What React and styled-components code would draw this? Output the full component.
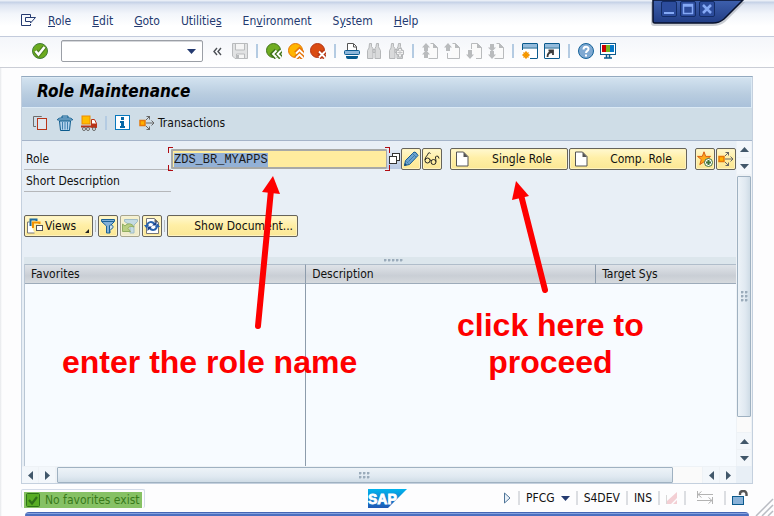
import React, { useEffect, useRef } from "react";
import styled, { createGlobalStyle, css } from "styled-components";

const Global = createGlobalStyle`
  *, *::before, *::after { box-sizing: border-box; }
  body { margin: 0; overflow: hidden; background: #fdfdfe; }
  button, input, select { font: inherit; color: inherit; margin: 0; }
  button { padding: 0; border: 0; background: none; }
  svg { display: block; flex: none; }
`;

const Page = styled.div`
  position: relative;
  display: flex;
  flex-direction: column;
  height: 100vh;
  font: 12px/16px "DejaVu Sans Condensed", "Noto Sans", sans-serif;
  color: #111;
  background: linear-gradient(90deg, #e6e8eb, #fdfdfe 2px);
`;

/* ---------- menu and system toolbar ---------- */

const MenuBar = styled.nav`
  display: flex;
  align-items: center;
  gap: 21px;
  height: 37px;
  flex: none;
  padding: 6px 20px 0;
  color: #243a70;
  background: linear-gradient(#e9eef6 0 1px, #c3d0e6 2px, #dde4f1 5px, #f3f6fb 14px, #fff 26px);
  border-bottom: 1px solid #c3cbdc;
`;

const MenuStart = styled.div`
  display: flex;
  align-items: center;
  gap: 12px;
`;

const SystemBar = styled.div`
  display: flex;
  align-items: center;
  gap: 6px;
  height: 31px;
  flex: none;
  padding: 0 32px 2px;
  background: linear-gradient(#f4f6fa, #fff);
  border-bottom: 1px solid #cbced6;
`;

const CommandField = styled.div`
  display: flex;
  align-items: center;
  width: 142px;
  height: 22px;
  margin: 0 4px 0 7px;
  padding-right: 6px;
  background: #fff;
  border: 1px solid #9b9fa6;
  border-radius: 2px;
  box-shadow: inset 0 1px 0 #d5d7db;
`;

const CommandInput = styled.input`
  flex: 1;
  min-width: 0;
  height: 18px;
  border: 0;
  outline: 0;
  background: transparent;
`;

const Divider = styled.span`
  flex: none;
  width: ${(p) => p.$w || 2}px;
  height: ${(p) => p.$h || 14}px;
  margin: 0 ${(p) => p.$m || 0}px;
  background: ${(p) => p.$color || "#b4cbe2"};
`;

const SaveSlot = styled.div`
  display: flex;
  padding-left: 4px;
`;

const WindowTab = styled.div`
  position: absolute;
  top: 0;
  right: 28px;
  width: 98px;
  height: 28px;
`;

const WindowButtons = styled.div`
  position: absolute;
  top: 1px;
  left: 13px;
  display: flex;
  gap: 3px;
`;

const WindowButton = styled.button`
  width: 16px;
  height: 16px;
  border: 1px solid #132c66;
  border-radius: 2px;
  background: #2c4c9c;
`;

/* ---------- main panel ---------- */

const Panel = styled.main`
  display: flex;
  flex-direction: column;
  flex: 1;
  min-height: 0;
  margin: 8px 21px 0;
  border: 1px solid #c4d0de;
  border-top: 1px solid #93a9bf;
  background: #e8eff6;
`;

const TitleBar = styled.h1`
  flex: none;
  height: 31px;
  margin: 0;
  padding: 0 15px;
  font-size: 17px;
  line-height: 26px;
  font-weight: bold;
  font-style: italic;
  color: #000;
  background: linear-gradient(#d2e2ef, #b9cde0 55%, #aac1da);
  border: 1px solid #dceaf5;
  border-width: 1px 1px 1px 0;
`;

const AppBar = styled.div`
  display: flex;
  align-items: center;
  gap: 8px;
  flex: none;
  height: 33px;
  padding: 0 11px 2px;
  background: #cfdde7;
  border-bottom: 1px solid #a5b4c9;
`;

const TextTool = styled.button`
  display: flex;
  align-items: center;
  gap: 3px;
`;

const Viewport = styled.div`
  display: grid;
  grid-template: minmax(0, 1fr) 17px / minmax(0, 1fr) 16px;
  flex: 1;
  min-height: 0;
`;

const Content = styled.div`
  display: flex;
  flex-direction: column;
  min-width: 0;
  padding-left: 2px;
  overflow: hidden;
`;

const Form = styled.div`
  display: flex;
  flex-direction: column;
  flex: none;
  padding-top: 7px;
`;

const Row = styled.div`
  display: flex;
  align-items: center;
  height: 22px;
`;

const FieldLabel = styled.label`
  flex: none;
  width: 147px;
  height: 22px;
  padding-left: 2px;
  line-height: 22px;
  border-bottom: 1px solid #b5b7ba;
`;

const corner = css`
  content: "";
  position: absolute;
  width: 5px;
  top: -2px;
  bottom: -2px;
  background:
    linear-gradient(#b00c12 0 0) var(--edge) top / 1px 6px no-repeat,
    linear-gradient(#b00c12 0 0) var(--edge) bottom / 1px 6px no-repeat,
    linear-gradient(#b00c12 0 0) 0 top / 5px 1px no-repeat,
    linear-gradient(#b00c12 0 0) 0 bottom / 5px 1px no-repeat;
`;

const RoleField = styled.div`
  position: relative;
  flex: none;
  width: 216px;
  height: 20px;
  &::before { ${corner} --edge: left; left: -3px; }
  &::after { ${corner} --edge: right; right: -3px; }
`;

const RoleInput = styled.input`
  display: block;
  width: 216px;
  height: 20px;
  padding: 2px 2px 0 1px;
  border: 2px solid #a8a9a6;
  border-right-width: 1px;
  border-radius: 1px;
  outline: 0;
  background: #ffec9e;
  font: 12px/14px "Liberation Mono", monospace;
  color: #1a1a1a;
  &::selection { background: #93b1d6; color: #1a1a1a; }
`;

const HelpButton = styled.button`
  display: flex;
  align-items: center;
  justify-content: center;
  width: 16px;
  height: 19px;
  background: linear-gradient(#dfe8f4, #b9c9e4);
`;

const Button = styled.button`
  display: flex;
  align-items: center;
  justify-content: ${(p) => p.$align || "center"};
  flex: none;
  width: ${(p) => p.$w || 20}px;
  height: 22px;
  padding: ${(p) => p.$pad || "0"};
  gap: ${(p) => p.$gap || 0}px;
  border: 1px solid ${(p) => (p.$faded ? "#a7a58f" : "#66645c")};
  border-radius: 2px;
  background: ${(p) =>
    p.$faded
      ? "linear-gradient(#f6f1cc, #efebc9)"
      : "linear-gradient(#fff8d0, #ffefa6 45%, #fbe795)"};
  box-shadow: inset 0 0 0 1px ${(p) => (p.$faded ? "#f4f1d6" : "#fff3bd")};
  white-space: nowrap;
`;

const Cluster = styled.div`
  display: flex;
  gap: ${(p) => p.$gap || 1}px;
  margin-left: ${(p) => p.$ml || 0}px;
`;

const Caption = styled.span`
  flex: 1;
  text-align: center;
`;

const ViewsRow = styled(Row)`
  gap: 2px;
  margin: 23px 0 20px;
`;

const Notch = styled.span`
  align-self: flex-end;
  margin: 0 3px 3px auto;
  border: 2px solid #222;
  border-top-color: transparent;
  border-left-color: transparent;
`;

const Splitter = styled.div`
  display: flex;
  justify-content: center;
  align-items: center;
  flex: none;
  height: 7px;
  padding-left: 27px;
  background: #dce6ec;
`;

const Grip = styled.span`
  width: ${(p) => p.$w}px;
  height: ${(p) => p.$h}px;
  background: radial-gradient(circle at 1px 1px, #9aabba 1px, transparent 2px) 0 0 / 4px 4px;
`;

const Table = styled.table`
  width: 100%;
  height: 100%;
  table-layout: fixed;
  border-collapse: separate;
  border-spacing: 0;
  background: #f7fbff;
  border-left: 1px solid #b9c6d4;
`;

const TableBox = styled.div`
  flex: 1;
  min-height: 0;
`;

const Th = styled.th`
  width: ${(p) => p.$w};
  height: 20px;
  padding: 0 6px;
  font-weight: normal;
  text-align: left;
  background: linear-gradient(#dfe3e8, #c9ced5 60%, #d6dade);
  border-top: 1px solid #b0bdca;
  border-bottom: 1px solid #9dabba;
  & + & { border-left: 1px solid #8d9cac; }
`;

const Td = styled.td`
  padding: 0;
  border-left: ${(p) => (p.$line ? "1px solid #8d9cac" : "0")};
`;

/* ---------- scrollbars ---------- */

const ScrollBar = styled.div`
  display: flex;
  flex-direction: ${(p) => (p.$vertical ? "column" : "row")};
  gap: 1px;
  background: #eef2f6;
  padding: ${(p) => (p.$vertical ? "0 1px" : "1px 0 0")};
  min-width: 0;
  min-height: 0;
`;

const ScrollButton = styled.button`
  display: flex;
  align-items: center;
  justify-content: center;
  flex: none;
  width: ${(p) => (p.$vertical ? "auto" : "16px")};
  height: ${(p) => (p.$vertical ? "16px" : "auto")};
  background: #f3f7fb;
`;

const Track = styled.div`
  display: flex;
  flex-direction: ${(p) => (p.$vertical ? "column" : "row")};
  flex: 1;
  min-height: 0;
  margin: ${(p) => (p.$vertical ? "1px 0 0" : "0 0 0 1px")};
  background: #fafafa;
`;

const Thumb = styled.div`
  display: flex;
  align-items: center;
  justify-content: center;
  flex: 0 0 ${(p) => p.$size};
  border: 1px solid #9fb1c1;
  border-radius: 1px;
  background: linear-gradient(${(p) => (p.$vertical ? "90deg" : "180deg")}, #edf3f8, #e0e9f1 60%, #cfdce6);
`;

/* ---------- status bar ---------- */

const StatusBar = styled.footer`
  display: grid;
  grid-template-columns: 1fr auto 1fr;
  align-items: center;
  flex: none;
  height: 28px;
  margin: 0 21px;
`;

const MessageFrame = styled.div`
  justify-self: start;
  padding: 2px 2px 0;
  border: 1px solid #d3dbe8;
  border-bottom: 0;
  border-radius: 2px;
`;

const Message = styled.div`
  display: flex;
  align-items: center;
  gap: 5px;
  height: 16px;
  padding: 0 2px;
  color: #397a1b;
  background: #86c164;
`;

const StatusItems = styled.div`
  display: flex;
  align-items: center;
  justify-content: flex-end;
  gap: 6px;
  padding-right: 5px;
`;

const StatusButton = styled.button`
  display: flex;
  align-items: center;
  gap: 6px;
`;

const BottomEdge = styled.div`
  flex: none;
  height: 4px;
  margin: 0 25px;
  border-top: 1px solid #4666b4;
  border-radius: 12px 12px 0 0;
  background: linear-gradient(#86a3e0 0 1px, #4b6fc0 1px);
`;

const SizeGrip = styled.div`
  position: absolute;
  right: 0;
  bottom: 0;
`;

/* ---------- callouts ---------- */

const Callouts = styled.div`
  position: absolute;
  inset: 0;
  pointer-events: none;
`;

const Arrow = styled.svg`
  position: absolute;
  left: ${(p) => p.$x}px;
  top: ${(p) => p.$y}px;
`;

const Note = styled.p`
  position: absolute;
  left: ${(p) => p.$x}px;
  top: ${(p) => p.$y}px;
  margin: 0;
  font: bold 32px/37px "Liberation Sans", Arial, sans-serif;
  color: #fe0000;
  text-align: center;
  white-space: nowrap;
`;

/* ---------- icons ---------- */

const Icon = ({ children, w = 16, h = 16, ...rest }) => (
  <svg width={w} height={h} viewBox={`0 0 ${w} ${h}`} fill="none" aria-hidden="true" {...rest}>
    {children}
  </svg>
);

const MenuIcon = () => (
  <Icon stroke="#243a70">
    <path d="M10.500 4V1.500h-9v11h9V11" />
    <path d="M5.500 4.500h10L10.500 10v-1.500h-5z" />
  </Icon>
);

const OkIcon = () => (
  <Icon>
    <circle cx="8" cy="8" r="7.500" fill="#6cab1f" stroke="#427c3a" />
    <path d="M3.500 8l3 3.500 6-7.500" stroke="#4b7d22" strokeWidth="4.500" />
    <path d="M3.500 8l3 3.500 6-7.500" stroke="#fff" strokeWidth="2.500" />
  </Icon>
);

const DropArrow = ({ color = "#243a70" }) => (
  <Icon w={9} h={5}><path d="M0 0h9L4.500 5z" fill={color} /></Icon>
);

const ChevronsIcon = () => (
  <Icon w={9} h={9} stroke="#4b4f55" strokeWidth="1.400"><path d="M4 1L1 4.500 4 8M8 1L5 4.500 8 8" /></Icon>
);

const SaveIcon = () => (
  <Icon stroke="#b9bbbd">
    <path d="M.5.5h15v15H3l-2.500-2.500z" fill="#e1e2e3" />
    <path d="M3.500 1v6h9V1M4.500 15v-4h8v4" fill="#f5f5f5" />
    <path d="M6 12v3" strokeWidth="2" />
  </Icon>
);

const Round = ({ fill, edge, kind }) => (
  <Icon>
    <circle cx="7.500" cy="7.500" r="7" fill={fill} stroke={edge} />
    {["5", "1.800"].map((w, i) => (
      <path
        key={w}
        stroke={i ? "#fff" : edge}
        strokeWidth={w}
        d={
          kind === "back"
            ? "M10.500 7.500L7 11l3.500 3.500M15 7.500L11.500 11l3.500 3.500"
            : kind === "up"
            ? "M8 10.500L11.500 7l3.500 3.500M8 15l3.500-3.500L15 15"
            : "M9 8.500l6 6M15 8.500l-6 6"
        }
      />
    ))}
  </Icon>
);

const PrintIcon = () => (
  <Icon>
    <path d="M3.500 8V.5h6l3 3V8" fill="#fff" stroke="#555" />
    <path d="M9.500 1v3h3" stroke="#555" />
    <rect x=".5" y="7.500" width="15" height="4" rx="1" fill="#8db6da" stroke="#0d5c91" />
    <path d="M2 13h12v1q0 2-2 2H4q-2 0-2-2z" fill="#075a8e" />
  </Icon>
);

const FindIcon = ({ more }) => (
  <Icon stroke="#b5b7b9" fill="#d9dadb">
    <path d="M3.500 .5h2v3l1.500 2v10H1.500V7.500L3 5zM10.500 .5h2v3l.5 1.500 1.500 2.500v8H9v-10l1-2z" />
    <path d="M7 6.500h2v3H7z" />
    {more && (
      <>
        <path d="M10.500 5.500h3v2h2v4h-2v2.500h-3v-2.500h-2v-4h2z" fill="#f4f4f4" />
        <path d="M12 7v5M9.500 9.500h5" stroke="#c4c5c7" />
      </>
    )}
  </Icon>
);

const PageIcon = ({ up, down, both }) => (
  <Icon>
    <path
      d={down && !up && !both ? "M5.500 6V.5h6l4 4v11H10" : "M8.500.5h3l4 4v11h-9"}
      fill="#fafafa"
      stroke="#b9bbbd"
    />
    {up && !both && <path d="M3.500 10v5.500H8" stroke="#b9bbbd" />}
    <path d="M11 0l5 5h-5z" fill="#b9bbbd" />
    <g fill="#b9bbbd">
      {up && <path d="M4 0l4 4.500H6V8H2V4.500H0z" />}
      {up && both && <path d="M4 7l4 4.500H6V15H2v-3.500H0z" />}
      {down && !both && <path d="M4 16l4-4.500H6V7H2v4.500H0z" />}
      {down && both && <path d="M4 8.500L0 4.500h2V1h4v3.500h2zM4 16l-4-4.500h2V8h4v3.500h2z" />}
    </g>
  </Icon>
);

const WindowIcon = ({ link }) => (
  <Icon>
    <rect x=".5" y=".5" width="15" height="15" rx=".5" fill="#fff" stroke="#0b5a8d" />
    <path d="M1 1h14v3.500H1z" fill="#93bbdc" />
    <path d="M1 5h14" stroke="#0b5a8d" />
    {link ? (
      <path d="M3.500 14c0-4 2-5 5-5M4.500 7.500h4.500V12" stroke="#3d3d3d" strokeWidth="1.800" />
    ) : (
      <>
        <path d="M0 7h8v9H0z" fill="#fff" />
        <circle cx="4" cy="12" r="2.500" fill="#ffb300" stroke="#f08a00" />
        <path d="M4 8v8M0 12h8M1.500 9.500l5 5M6.500 9.500l-5 5" stroke="#f39200" />
      </>
    )}
  </Icon>
);

const HelpIcon = () => (
  <Icon>
    <circle cx="8" cy="8" r="7.500" fill="#7fa9d2" stroke="#15639a" />
    <path d="M5.500 6.500c0-3.500 5-3.500 5-.5 0 2-2.500 1.800-2.500 4M8 11.500v2" stroke="#fff" strokeWidth="2" />
  </Icon>
);

const MonitorIcon = () => (
  <Icon>
    <rect x=".5" y=".5" width="15" height="11" fill="#fff" stroke="#0b5a8d" />
    <path d="M2 2h4v7H2z" fill="#cc0000" /><path d="M6 2h4v7H6z" fill="#76b522" /><path d="M10 2h4v7h-4z" fill="#0779c8" />
    <path d="M6.500 12v3M9.500 12v3M4 15h8" stroke="#0b5a8d" strokeWidth="1.500" />
  </Icon>
);

const CopyIcon = () => (
  <Icon>
    <path d="M8.500 2V1.500h-8v10H3" stroke="#6d6d6d" />
    <rect x="4.500" y="3.500" width="9" height="11" fill="#dfe6ed" stroke="#b93417" />
  </Icon>
);

const TrashIcon = () => (
  <Icon stroke="#0b5a8d">
    <path d="M5 3V1h6v2M.5 5c0-1.500 2-2 3.500-2h8c1.500 0 3.500.5 3.500 2z" fill="#b5d3ec" />
    <path d="M2.500 6l1 9.500h9l1-9.500z" fill="#b5d3ec" />
    <path d="M5.500 7v7.500M8 7v7.500M10.500 7v7.500" stroke="#3f80b0" />
  </Icon>
);

const TruckIcon = () => (
  <Icon>
    <rect x="1" y="1" width="8" height="8" fill="#ffbd00" stroke="#ed8b00" />
    <path d="M0 11.500h11" stroke="#b93417" strokeWidth="2" />
    <path d="M10.500 4.500h3l2 4v4h-5z" fill="#fff" stroke="#b93417" />
    <path d="M11 8.500h5v4h-5z" fill="#b93417" />
    <g fill="#eee" stroke="#666"><circle cx="3" cy="14" r="1.500" /><circle cx="7" cy="14" r="1.500" /><circle cx="13" cy="14" r="1.500" /></g>
  </Icon>
);

const InfoIcon = () => (
  <Icon>
    <rect x=".5" y=".5" width="14" height="14" fill="#fff" stroke="#0878bd" />
    <path d="M6 2h3v3H6zM5 6h4v5h1v2H5v-2h1V8H5z" fill="#0768a6" />
  </Icon>
);

const BranchIcon = () => (
  <Icon>
    <rect x="1" y="5.500" width="5" height="5" fill="#ffb000" stroke="#e4780b" strokeWidth="1.500" />
    <path d="M7 8h8M12.500 5.500L15 8l-2.500 2.500M7 5l4-4M7 11l4 4M7.500 1.500h3v3M7.500 14.500h3v-3" stroke="#666" />
  </Icon>
);

const StackIcon = () => (
  <Icon w={11} h={12} stroke="#333">
    <rect x="3.500" y=".5" width="7" height="7" fill="#fff" />
    <rect x=".5" y="3.500" width="7" height="7" fill="#fff" />
  </Icon>
);

const PencilIcon = () => (
  <Icon>
    <path d="M1.500 14.500l1-5 8.500-8.500q2-.5 4 3.500l-8.500 9z" fill="#6ca3cf" stroke="#175b91" />
    <path d="M3.500 10.500l2 2M5.500 10.500L12 4M9.500 2.500l3.500 3.500" stroke="#3b7db0" />
    <path d="M1 15l1-3 2 2z" fill="#174c78" />
  </Icon>
);

const GlassesIcon = () => (
  <Icon stroke="#222">
    <circle cx="3.500" cy="9.500" r="2.500" />
    <circle cx="9.500" cy="11" r="2.500" />
    <path d="M1 9C1 5.500 4 4.500 4 2.500q1.500-1.500 2.500 0M6 9.500q1-1 1.500 0M12 10.500C12 8 10.500 6 12.500 5q2-.5 2.500 2.500" />
  </Icon>
);

const SheetIcon = () => (
  <Icon w={13} h={16}>
    <path d="M.5 1h7l4.500 4.500V15H.5z" fill="#fff" stroke="#555" /><path d="M7.500 1v5H12z" fill="#555" />
  </Icon>
);

const StarIcon = () => (
  <Icon>
    <path d="M7 .8l1.700 4.600h4.800L9.700 8.600l1.400 5L7 10.800l-4.200 2.800 1.500-5L.5 5.400h4.800z" fill="#ffa91a" stroke="#d95e12" />
    <circle cx="11.500" cy="11.500" r="4" fill="#fff" stroke="#40743b" /><path d="M11.500 9v5M9 11.500h5" stroke="#40743b" strokeWidth="2" />
  </Icon>
);

const ViewsIcon = () => (
  <Icon>
    <path d="M2.500 4H.5v11h7" fill="#fff" stroke="#777" />
    <path d="M3.500 8V1.500h6V3" stroke="#1d6a9f" strokeWidth="2" />
    <path d="M6 10V4.500h6.500V6" stroke="#f39200" strokeWidth="2" />
    <rect x="9.500" y="7.500" width="6" height="5" fill="#fff" stroke="#555" />
  </Icon>
);

const FilterIcon = () => (
  <Icon stroke="#1b6296">
    <path d="M1.500 1.500h13v2L10 8v7H6.500V8l-5-4.500z" fill="#83b0d8" /><path d="M2 3.500h12" />
    <path d="M9.500 15V7.500c4-2 5 3 1 4" fill="#cfe0ec" />
  </Icon>
);

const UndoFilterIcon = () => (
  <Icon>
    <path d="M2.500 1.500h13v2L12 7v8H8V7L2.500 3.500z" fill="#c5dbe3" stroke="#9fbcc6" />
    <path d="M.5 13.500V6L3 8c2-3 7-3 9 1-3-1-5-1-6 1.500l2.500 3z" fill="#b9cf82" stroke="#92ae63" />
  </Icon>
);

const RefreshIcon = () => (
  <Icon>
    <path d="M2.500.5h8l4 4v11h-12z" fill="#fff" stroke="#777" /><path d="M10.500.5v4h4z" fill="#666" />
    <path d="M3 7.500C4 3.500 8 3 10.500 6M13 8.500c-1 4-5 4.500-7.500 1.500" stroke="#2862ac" strokeWidth="2" />
    <path d="M8 7.500h4.500V3.500zM8 8.500H3.500v4.500z" fill="#173f87" />
    <path d="M0 7h5l-2.500 3.500zM11 9h5l-2.500-3.500z" fill="#2862ac" />
  </Icon>
);

const TRI = { up: "M0 5l4.500-5L9 5z", down: "M0 0h9L4.500 5z", left: "M5 0v9L0 4.500z", right: "M0 0v9l5-4.500z" };
const ScrollArrow = ({ dir }) => {
  const v = dir === "up" || dir === "down";
  return <Icon w={v ? 9 : 5} h={v ? 5 : 9}><path d={TRI[dir]} fill="#41576a" /></Icon>;
};

const SapLogo = () => (
  <svg width="39" height="19" viewBox="0 0 39 19" role="img" aria-label="SAP">
    <defs><linearGradient id="sap" x2="0" y2="1"><stop stopColor="#00b4ee" /><stop offset="1" stopColor="#1f58b5" /></linearGradient></defs>
    <path d="M0 0h39L20 19H0z" fill="url(#sap)" />
    <text x="0" y="15" fontFamily="Liberation Sans" fontWeight="bold" fontSize="14" fill="#fff" stroke="#fff" strokeWidth=".8">SAP</text>
  </svg>
);

/* ---------- page ---------- */

const MENUS = [["", "R", "ole"], ["", "E", "dit"], ["", "G", "oto"], ["Utilitie", "s", ""], ["En", "v", "ironment"], ["S", "y", "stem"], ["", "H", "elp"]];
const MenuItem = ({ parts: [a, key, b] }) => <button>{a}<u>{key}</u>{b}</button>;
const Tool = ({ label, children }) => <button aria-label={label}>{children}</button>;

export default function App() {
  const role = useRef(null);
  useEffect(() => {
    role.current.focus();
    role.current.select();
  }, []);

  return (
    <Page>
      <Global />
      <MenuBar>
        <MenuStart><Tool label="Menu"><MenuIcon /></Tool><MenuItem parts={MENUS[0]} /></MenuStart>
        {MENUS.slice(1).map((m) => <MenuItem key={m.join("")} parts={m} />)}
      </MenuBar>

      <WindowTab>
        <svg width="98" height="28" viewBox="0 0 98 28" aria-hidden="true">
          <defs><linearGradient id="tab" x2="0" y2="1"><stop stopColor="#3e60ae" /><stop offset="1" stopColor="#213d84" /></linearGradient></defs>
          <path d="M3 2v21q0 3 3 3h59q7 0 12-4L97 2z" fill="#a9adb6" opacity=".6" />
          <path d="M5 0v21q0 2 2 2h58q6 0 11-4L95 0z" fill="url(#tab)" stroke="#07112c" strokeWidth="1.500" />
        </svg>
        <WindowButtons>
          <WindowButton aria-label="Minimize"><Icon w={14} h={14}><path d="M2 11h10" stroke="#85a9f5" strokeWidth="2" /></Icon></WindowButton>
          <WindowButton aria-label="Maximize"><Icon w={14} h={14}><path d="M2.500 2.500h9v9h-9zM2 4h10" stroke="#85a9f5" strokeWidth="1.500" /></Icon></WindowButton>
          <WindowButton aria-label="Close"><Icon w={14} h={14}><path d="M3 3l8 8M11 3l-8 8" stroke="#85a9f5" strokeWidth="2.500" /></Icon></WindowButton>
        </WindowButtons>
      </WindowTab>

      <SystemBar>
        <Tool label="Enter"><OkIcon /></Tool>
        <CommandField><CommandInput aria-label="Command" /><DropArrow /></CommandField>
        <Tool label="Collapse"><ChevronsIcon /></Tool>
        <SaveSlot><Tool label="Save"><SaveIcon /></Tool></SaveSlot>
        <Divider $m={2} />
        <Tool label="Back"><Round kind="back" fill="#70ad22" edge="#42751c" /></Tool>
        <Tool label="Exit"><Round kind="up" fill="#ffb500" edge="#e5740a" /></Tool>
        <Tool label="Cancel"><Round kind="x" fill="#da4b12" edge="#b53514" /></Tool>
        <Divider $m={2} />
        <Tool label="Print"><PrintIcon /></Tool>
        <Tool label="Find"><FindIcon /></Tool>
        <Tool label="Find next"><FindIcon more /></Tool>
        <Divider $m={2} />
        <Tool label="First page"><PageIcon up both /></Tool>
        <Tool label="Previous page"><PageIcon up /></Tool>
        <Tool label="Next page"><PageIcon down /></Tool>
        <Tool label="Last page"><PageIcon down both /></Tool>
        <Divider $m={2} />
        <Tool label="New session"><WindowIcon /></Tool>
        <Tool label="Create shortcut"><WindowIcon link /></Tool>
        <Divider $m={2} />
        <Tool label="Help"><HelpIcon /></Tool>
        <Tool label="Customize layout"><MonitorIcon /></Tool>
      </SystemBar>

      <Panel>
        <TitleBar>Role Maintenance</TitleBar>
        <AppBar>
          <Tool label="Copy"><CopyIcon /></Tool>
          <Tool label="Delete"><TrashIcon /></Tool>
          <Tool label="Transport"><TruckIcon /></Tool>
          <Divider />
          <Tool label="Information"><InfoIcon /></Tool>
          <TextTool><BranchIcon />Transactions</TextTool>
        </AppBar>

        <Viewport>
          <Content>
            <Form>
              <Row>
                <FieldLabel htmlFor="role">Role</FieldLabel>
                <RoleField><RoleInput id="role" ref={role} defaultValue="ZDS_BR_MYAPPS" spellCheck={false} /></RoleField>
                <HelpButton aria-label="Search roles"><StackIcon /></HelpButton>
                <Cluster>
                  <Button aria-label="Change"><PencilIcon /></Button>
                  <Button aria-label="Display"><GlassesIcon /></Button>
                </Cluster>
                <Cluster $ml={8}>
                  <Button $w={118} $pad="0 2px 0 5px" $gap={10}><SheetIcon /><Caption>Single Role</Caption></Button>
                  <Button $w={118} $pad="0 2px 0 5px" $gap={10}><SheetIcon /><Caption>Comp. Role</Caption></Button>
                </Cluster>
                <Cluster $ml={8}>
                  <Button aria-label="Add to favorites"><StarIcon /></Button>
                  <Button aria-label="Where-used list"><BranchIcon /></Button>
                </Cluster>
              </Row>
              <Row><FieldLabel as="span">Short Description</FieldLabel></Row>
              <ViewsRow>
                <Button $w={69} $align="flex-start" $pad="0 0 0 2px" $gap={2}><ViewsIcon />Views<Notch /></Button>
                <Divider $color="#b9bcc0" $h={12} $w={1} />
                <Button aria-label="Set filter"><FilterIcon /></Button>
                <Button aria-label="Delete filter" $faded disabled><UndoFilterIcon /></Button>
                <Button aria-label="Refresh"><RefreshIcon /></Button>
                <Divider $color="#b9bcc0" $h={12} $w={1} />
                <Button $w={131} $align="flex-end" $pad="0 4px">Show Document...</Button>
              </ViewsRow>
            </Form>
            <Splitter><Grip $w={20} $h={3} /></Splitter>
            <TableBox>
              <Table>
                <thead>
                  <tr><Th $w="39.4%">Favorites</Th><Th $w="40.8%">Description</Th><Th>Target Sys</Th></tr>
                </thead>
                <tbody><tr><Td /><Td $line /><Td /></tr></tbody>
              </Table>
            </TableBox>
          </Content>

          <ScrollBar $vertical>
            <ScrollButton $vertical aria-label="Scroll up"><ScrollArrow dir="up" /></ScrollButton>
            <ScrollButton $vertical aria-label="Scroll down"><ScrollArrow dir="down" /></ScrollButton>
            <Track $vertical><Thumb $vertical $size="94%"><Grip $w={7} $h={11} /></Thumb></Track>
            <ScrollButton $vertical aria-label="Scroll up"><ScrollArrow dir="up" /></ScrollButton>
            <ScrollButton $vertical aria-label="Scroll down"><ScrollArrow dir="down" /></ScrollButton>
          </ScrollBar>
          <ScrollBar>
            <ScrollButton aria-label="Scroll left"><ScrollArrow dir="left" /></ScrollButton>
            <ScrollButton aria-label="Scroll right"><ScrollArrow dir="right" /></ScrollButton>
            <Track><Thumb $size="95.500%"><Grip $w={11} $h={7} /></Thumb></Track>
            <ScrollButton aria-label="Scroll left"><ScrollArrow dir="left" /></ScrollButton>
            <ScrollButton aria-label="Scroll right"><ScrollArrow dir="right" /></ScrollButton>
          </ScrollBar>
        </Viewport>
      </Panel>

      <StatusBar>
        <MessageFrame>
          <Message role="status">
            <Icon w={14} h={14}><rect x=".5" y=".5" width="13" height="13" rx="1" fill="#58ad24" stroke="#2d7417" /><path d="M3 7l3 3.500L11 4" stroke="#2f7018" strokeWidth="2.200" /></Icon>
            No favorites exist
          </Message>
        </MessageFrame>
        <SapLogo />
        <StatusItems>
          <Tool label="Expand"><Icon w={9} h={12}><path d="M1.500 1v10L7 6z" fill="#e8f0f8" stroke="#4f7598" /></Icon></Tool>
          <Divider $color="#dcdee2" />
          <StatusButton>PFCG <DropArrow /></StatusButton>
          <Divider $color="#dcdee2" />
          <span>S4DEV</span>
          <Divider $color="#dcdee2" />
          <span>INS</span>
          <Divider $color="#dcdee2" />
          <Icon w={12} h={14}><path d="M.5 13V4" stroke="#d8d8d8" /><path d="M1 13V10L11 1v6l-6 6zM7 13l4-4v4z" fill="#f3cfd4" /></Icon>
          <Divider $color="#dcdee2" />
          <Icon w={26} h={14} stroke="#b3b3b3"><path d="M5.500 0v7M6 3.500h15M9.500.5L6 3.500l3.500 3M20.500 6v7M5 9.500h15M16.500 6.500l3.500 3-3.500 3" /></Icon>
          <Divider $color="#dcdee2" />
          <Icon w={16} h={16}><path d="M8 5V4c0-4 6.500-4 6.500 0v2" stroke="#555" strokeWidth="2.400" /><rect x=".5" y="6.500" width="11" height="8" fill="#89b2d8" stroke="#0b5a8d" /></Icon>
        </StatusItems>
      </StatusBar>
      <BottomEdge />
      <SizeGrip><Icon w={19} h={19} stroke="#b9bcc2"><path d="M1 19L18 2M7 19L18 8M13 19l5-5" strokeWidth="1.500" /></Icon></SizeGrip>

      <Callouts>
        <Arrow $x={239} $y={170} width="50" height="165" viewBox="0 0 50 165" aria-hidden="true">
          <path d="M19 156L32 20" stroke="#fe0000" strokeWidth="6" strokeLinecap="round" /><path d="M34 6l7 18-18-2z" fill="#fe0000" />
        </Arrow>
        <Arrow $x={500} $y={170} width="60" height="130" viewBox="0 0 60 130" aria-hidden="true">
          <path d="M45 120L21 25" stroke="#fe0000" strokeWidth="6" strokeLinecap="round" /><path d="M16 11l13 15-17 4z" fill="#fe0000" />
        </Arrow>
        <Note $x={62} $y={344}>enter the role name</Note>
        <Note $x={457} $y={307}>click here to<br />proceed</Note>
      </Callouts>
    </Page>
  );
}
